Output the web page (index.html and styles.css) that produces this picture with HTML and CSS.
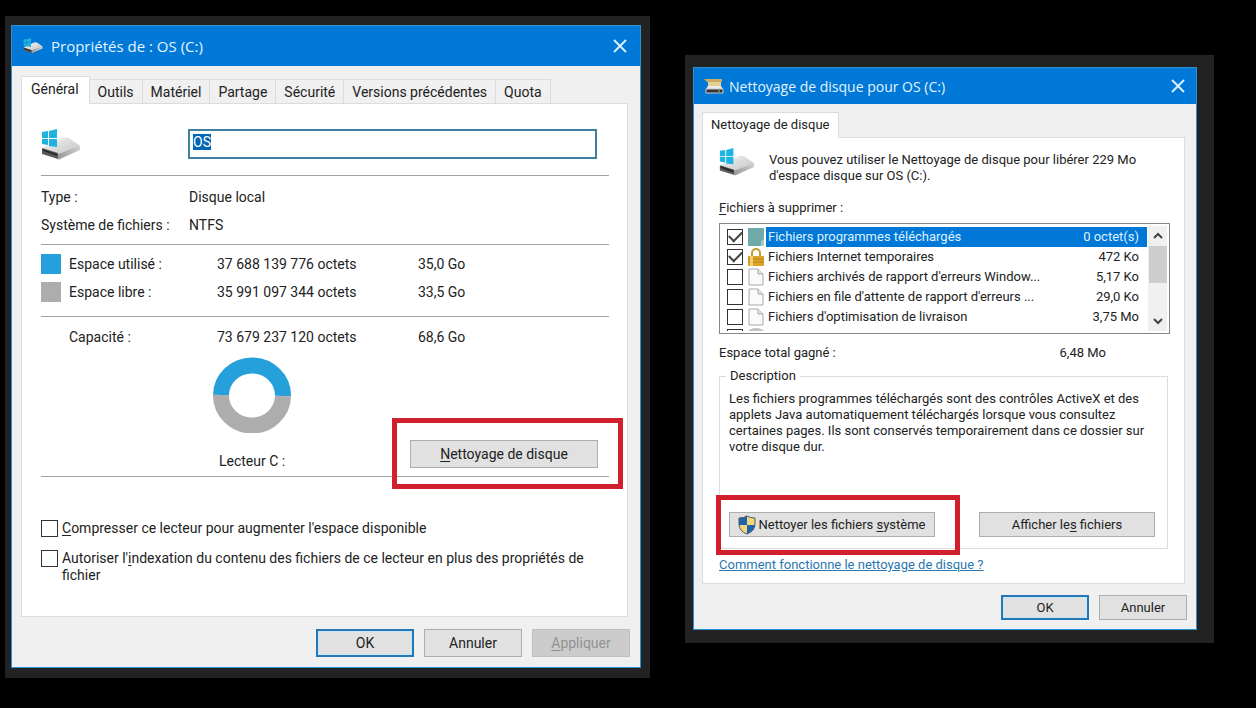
FILE: index.html
```html
<!DOCTYPE html>
<html lang="fr">
<head>
<meta charset="UTF-8">
<meta name="viewport" content="width=device-width, initial-scale=1.0">
<title>Nettoyage de disque</title>
<link rel="stylesheet" href="styles.css">
</head>
<body>

<!-- Shared drive icon -->
<svg class="sprite" aria-hidden="true">
  <defs>
    <linearGradient id="driveTop" x1="0" y1="0" x2="1" y2="1">
      <stop offset="0" stop-color="#f4f4f4"/>
      <stop offset="1" stop-color="#c4c4c4"/>
    </linearGradient>
    <linearGradient id="driveSide" x1="0" y1="0" x2="1" y2="0">
      <stop offset="0" stop-color="#989898"/>
      <stop offset="1" stop-color="#cfcfcf"/>
    </linearGradient>
  </defs>
  <symbol id="drive" viewBox="0 0 40 32">
    <path d="M1 19 L22 9 Q25 8 28 9 L38 16 Q39 17 39 18 L17 25 Z" fill="url(#driveTop)"/>
    <path d="M17 25 L39 17 V21 L19 30 Q18 31 17 30 Z" fill="url(#driveSide)"/>
    <path d="M1 19 L17 24 V30 L1 25 Z" fill="#5a5a5a"/>
    <path d="M2 20 L16 25 V27 L2 22 Z" fill="#2a2a2a"/>
    <path d="M1 3 L7 2 V9 H1 Z M8 2 L16 0 V9 H8 Z M1 10 H7 V16 L1 15 Z M8 10 H16 V18 L8 17 Z" fill="#1fb4e0"/>
  </symbol>
  <symbol id="page" viewBox="0 0 16 18">
    <path d="M1 1 H10 L15 6 V17 H1 Z" fill="#fafafa" stroke="#a8a8a8"/>
    <path d="M10 1 V6 H15" fill="#e8e8e8" stroke="#a8a8a8"/>
  </symbol>
</svg>

<main class="desktop">

  <div class="backdrop backdrop-left">
    <section class="window">
      <header class="titlebar titlebar-tall">
        <svg class="title-icon" viewBox="0 0 40 32"><use href="#drive"/></svg>
        <h1>Propriétés de : OS (C:)</h1>
        <button class="close" aria-label="Fermer">
          <svg viewBox="0 0 14 14"><path d="M1 1 L13 13 M13 1 L1 13"/></svg>
        </button>
      </header>

      <div class="window-body">
        <nav class="tabs">
          <button class="tab active">Général</button>
          <button class="tab">Outils</button>
          <button class="tab">Matériel</button>
          <button class="tab">Partage</button>
          <button class="tab">Sécurité</button>
          <button class="tab">Versions précédentes</button>
          <button class="tab">Quota</button>
        </nav>

        <div class="panel props">
          <div class="volume">
            <svg class="drive-icon" viewBox="0 0 40 32"><use href="#drive"/></svg>
            <input type="text" id="volumeName" value="OS" aria-label="Nom du volume">
          </div>

          <table class="facts">
            <tr><th>Type :</th><td>Disque local</td></tr>
            <tr><th>Système de fichiers :</th><td>NTFS</td></tr>
          </table>

          <table class="usage">
            <tr>
              <th><span class="swatch used"></span>Espace utilisé :</th>
              <td class="bytes">37 688 139 776 octets</td>
              <td>35,0 Go</td>
            </tr>
            <tr>
              <th><span class="swatch free"></span>Espace libre :</th>
              <td class="bytes">35 991 097 344 octets</td>
              <td>33,5 Go</td>
            </tr>
          </table>

          <table class="usage capacity">
            <tr>
              <th><span class="swatch"></span>Capacité :</th>
              <td class="bytes">73 679 237 120 octets</td>
              <td>68,6 Go</td>
            </tr>
          </table>

          <div class="chart-row">
            <figure class="chart">
              <svg viewBox="0 0 78 76">
                <path d="M8 38 A31 30 0 0 1 70 39" stroke="#26a0da"/>
                <path d="M8 38 A31 30 0 0 0 70 39" stroke="#adadad"/>
              </svg>
              <figcaption>Lecteur C :</figcaption>
            </figure>
            <div class="marked marked-wide">
              <button class="btn"><u>N</u>ettoyage de disque</button>
            </div>
          </div>

          <div class="options">
            <label class="option"><input type="checkbox"><span><u>C</u>ompresser ce lecteur pour augmenter l'espace disponible</span></label>
            <label class="option"><input type="checkbox"><span>Autoriser l'<u>i</u>ndexation du contenu des fichiers de ce lecteur en plus des propriétés de<br>fichier</span></label>
          </div>
        </div>

        <footer class="actions">
          <button class="btn default">OK</button>
          <button class="btn">Annuler</button>
          <button class="btn" disabled><u>A</u>ppliquer</button>
        </footer>
      </div>
    </section>
  </div>

  <div class="backdrop backdrop-right">
    <section class="window small">
      <header class="titlebar">
        <svg class="title-icon" viewBox="0 0 20 16">
          <path d="M0 1 H18 V4 H3 Z" fill="#c9ab62"/>
          <path d="M4 4 H17 V8 H4 Z" fill="#e6cf93"/>
          <path d="M4 8 H17 L19 11 H2 Z" fill="#e9e9e9"/>
          <path d="M2 11 H19 V15 H2 Z" fill="#333" stroke="#c8c8c8"/>
          <path d="M14 13 H16" stroke="#6fe06f"/>
        </svg>
        <h1>Nettoyage de disque pour OS (C:)</h1>
        <button class="close" aria-label="Fermer">
          <svg viewBox="0 0 14 14"><path d="M1 1 L13 13 M13 1 L1 13"/></svg>
        </button>
      </header>

      <div class="window-body">
        <nav class="tabs">
          <button class="tab active">Nettoyage de disque</button>
        </nav>

        <div class="panel cleanup">
          <div class="intro">
            <svg class="drive-icon" viewBox="0 0 40 32"><use href="#drive"/></svg>
            <p>Vous pouvez utiliser le Nettoyage de disque pour libérer 229 Mo<br>d'espace disque sur OS (C:).</p>
          </div>

          <p class="list-title"><u>F</u>ichiers à supprimer :</p>
          <div class="listbox">
            <ul>
              <li class="selected"><label>
                <input type="checkbox" checked>
                <svg viewBox="0 0 16 18"><path d="M0 0 H16 V18 H0 Z" fill="#6fa9a8"/><path d="M13 18 V13 L16 11 V18 Z" fill="#a5cbc8"/></svg>
                <span>Fichiers programmes téléchargés</span><b>0 octet(s)</b>
              </label></li>
              <li><label>
                <input type="checkbox" checked>
                <svg viewBox="0 0 16 18">
                  <path d="M4 9 V5 A4 4 0 0 1 12 5 V9" fill="none" stroke="#c9982f" stroke-width="2"/>
                  <path d="M0 8 H16 V18 H0 Z" fill="#dba52c"/>
                  <path d="M0 11 H16 M0 14 H16" stroke="#b97f14"/>
                  <path d="M2 8 H5 V18 H2 Z" fill="#f1cf6c"/>
                </svg>
                <span>Fichiers Internet temporaires</span><b>472 Ko</b>
              </label></li>
              <li><label>
                <input type="checkbox">
                <svg viewBox="0 0 16 18"><use href="#page"/></svg>
                <span>Fichiers archivés de rapport d'erreurs Window...</span><b>5,17 Ko</b>
              </label></li>
              <li><label>
                <input type="checkbox">
                <svg viewBox="0 0 16 18"><use href="#page"/></svg>
                <span>Fichiers en file d'attente de rapport d'erreurs ...</span><b>29,0 Ko</b>
              </label></li>
              <li><label>
                <input type="checkbox">
                <svg viewBox="0 0 16 18"><use href="#page"/></svg>
                <span>Fichiers d'optimisation de livraison</span><b>3,75 Mo</b>
              </label></li>
              <li><label>
                <input type="checkbox" aria-label="Corbeille">
                <svg viewBox="0 0 16 18"><ellipse cx="8" cy="4" rx="8" ry="4" fill="#c4c4c4"/></svg>
              </label></li>
            </ul>
            <div class="scrollbar">
              <svg viewBox="0 0 10 8"><path d="M1 6 L5 2 L9 6"/></svg>
              <div class="thumb"></div>
              <svg viewBox="0 0 10 8"><path d="M1 2 L5 6 L9 2"/></svg>
            </div>
          </div>

          <p class="total"><span>Espace total gagné :</span><span>6,48 Mo</span></p>

          <fieldset>
            <legend>Description</legend>
            <p>Les fichiers programmes téléchargés sont des contrôles ActiveX et des<br>applets Java automatiquement téléchargés lorsque vous consultez<br>certaines pages. Ils sont conservés temporairement dans ce dossier sur<br>votre disque dur.</p>
            <div class="group-buttons">
              <div class="marked">
                <button class="btn">
                  <svg class="shield" viewBox="0 0 18 20">
                    <path d="M9 1 Q12 3 17 3 V9 Q17 16 9 19 Q1 16 1 9 V3 Q6 3 9 1 Z" fill="#f3d57a"/>
                    <path d="M9 1 V10 H1 V3 Q6 3 9 1 Z" fill="#1f62ad"/>
                    <path d="M9 10 H17 Q16 16 9 19 Z" fill="#1f62ad"/>
                    <path d="M9 1 Q12 3 17 3 V9 Q17 16 9 19 Q1 16 1 9 V3 Q6 3 9 1 Z" fill="none" stroke="#4c5a68"/>
                  </svg>
                  <span>Nettoyer les fichiers <u>s</u>ystème</span>
                </button>
              </div>
              <button class="btn"><span>Afficher le<u>s</u> fichiers</span></button>
            </div>
          </fieldset>

          <a class="help" href="#">Comment fonctionne le nettoyage de disque ?</a>
        </div>

        <footer class="actions">
          <button class="btn default">OK</button>
          <button class="btn">Annuler</button>
        </footer>
      </div>
    </section>
  </div>

</main>

<script>
  // the volume name is selected when the dialog opens
  var volumeName = document.getElementById('volumeName');
  volumeName.focus();
  volumeName.select();
</script>
</body>
</html>
```
FILE: styles.css
```css
* {
  box-sizing: border-box;
}
body {
  margin: 0;
  background-color: #000;
  font-family: Roboto, "Liberation Sans", sans-serif;
  font-size: 14px;
  color: #222;
}
p, h1, ul, figure, fieldset {
  margin: 0;
  padding: 0;
}
button, input {
  font: inherit;
  color: inherit;
}
u {
  text-underline-offset: 2px;
}
.sprite {
  position: absolute;
  width: 0;
  height: 0;
}
.desktop {
  display: grid;
  grid-template-columns: minmax(0, 645fr) minmax(0, 529fr);
  gap: 35px;
  align-items: start;
  padding: 16px 42px 16px 5px;
}
.backdrop {
  background-color: #222;
}
.backdrop-left {
  padding: 9px 9px 10px 6px;
}
.backdrop-right {
  margin-top: 39px;
  padding: 12px 17px 13px 8px;
}

/* Windows */
.window {
  background-color: #f0f0f0;
  border: 1px solid #2f8fd0;
  white-space: nowrap;
}
.small {
  font-size: 13px;
}
.titlebar {
  display: flex;
  align-items: center;
  height: 36px;
  padding: 0 11px 0 9px;
  background-color: #0078d7;
  color: #e4f3ff;
}
.titlebar-tall {
  height: 40px;
  padding-right: 13px;
}
.titlebar h1 {
  flex: 1;
  font-family: "Open Sans", "Noto Sans", sans-serif;
  font-size: 14px;
  font-weight: normal;
}
.titlebar-tall h1 {
  font-size: 15px;
}
.title-icon {
  width: 20px;
  height: 16px;
  margin: 0 5px 0 1px;
}
.titlebar-tall .title-icon {
  margin: 0 8px 0 2px;
}
.close {
  display: flex;
  padding: 0;
  border: none;
  background: none;
}
.close svg {
  width: 14px;
  height: 14px;
  fill: none;
  stroke: #d8efff;
  stroke-width: 2;
}
.window-body {
  padding: 8px 8px 8px 7px;
  border: 1px solid #e3f3fc;
  border-top: none;
}
.titlebar-tall + .window-body {
  padding: 10px 9px 9px 8px;
}

/* Tabs */
.tabs {
  display: flex;
  align-items: flex-end;
  height: 27px;
}
.tab {
  height: 24px;
  padding: 0 8px;
  border: 1px solid #dcdcdc;
  border-left: none;
  border-bottom: none;
  background-color: #f0f0f0;
}
.tab.active {
  position: relative;
  height: 28px;
  margin-bottom: -1px;
  padding-bottom: 3px;
  border-left: 1px solid #dcdcdc;
  background-color: #fff;
}
.titlebar-tall + .window-body .active {
  padding-left: 9px;
  padding-right: 10px;
}
.small .tabs {
  height: 25px;
}
.small .tab.active {
  height: 26px;
}
.panel {
  background-color: #fff;
  border: 1px solid #dcdcdc;
}

/* Properties */
.props {
  margin-right: 2px;
  padding: 25px 18px 32px 19px;
}
.volume {
  display: flex;
  justify-content: space-between;
  height: 47px;
  padding-right: 12px;
  border-bottom: 1px solid #a0a0a0;
}
.drive-icon {
  width: 40px;
  height: 32px;
}
.volume input {
  width: 409px;
  height: 30px;
  padding: 0 3px 4px;
  border: 2px solid #3f7f9f;
  outline: none;
}
.volume input::selection {
  background-color: #0067b8;
  color: #fff;
}
table {
  width: 100%;
  border-collapse: collapse;
  table-layout: fixed;
}
th, td {
  height: 28px;
  padding: 0;
  line-height: 20px;
  text-align: left;
  font-weight: normal;
}
.facts th {
  width: 148px;
}
.facts, .usage {
  border-bottom: 1px solid #a0a0a0;
  border-collapse: separate;
  border-spacing: 0;
}
.facts {
  padding: 7px 0 5px;
}
.usage {
  padding: 5px 0 10px;
}
.usage th {
  width: 176px;
}
.usage .bytes {
  width: 201px;
}
.capacity {
  padding: 6px 0 0;
  border-bottom: none;
}
.swatch {
  float: left;
  width: 20px;
  height: 20px;
  margin-right: 8px;
}
.used {
  background-color: #26a0da;
}
.free {
  background-color: #adadad;
}
.chart-row {
  display: flex;
  justify-content: space-between;
  align-items: flex-end;
  padding: 6px 11px 5px 172px;
  border-bottom: 1px solid #a0a0a0;
}
.chart svg {
  display: block;
  width: 78px;
  height: 76px;
  fill: none;
  stroke-width: 16;
}
.chart figcaption {
  margin-top: 18px;
  padding-left: 6px;
  line-height: 20px;
}
.options {
  display: flex;
  flex-direction: column;
  gap: 13px;
  padding-top: 43px;
}
.option {
  display: flex;
  align-items: flex-start;
  gap: 4px;
  line-height: 17px;
}

/* Controls */
input[type="checkbox"] {
  appearance: none;
  flex: none;
  width: 17px;
  height: 17px;
  margin: 0;
  border: 1px solid #333;
  background-color: #fff;
}
.btn {
  width: 98px;
  height: 28px;
  padding: 0;
  border: 1px solid #adadad;
  background-color: #e1e1e1;
}
.btn.default {
  border: 2px solid #2678b5;
  outline: 1px solid #c9e6f8;
  outline-offset: -3px;
}
.btn:disabled {
  border-color: #bfbfbf;
  background-color: #ccc;
  color: #929292;
}
.actions {
  display: flex;
  justify-content: flex-end;
  gap: 10px;
  padding-top: 12px;
}
/* Red frame drawn over the button to press */
.marked {
  position: relative;
}
.marked::after {
  content: "";
  position: absolute;
  inset: -17px -25px -18px -13px;
  border: 5px solid #d0202e;
  pointer-events: none;
}
.marked-wide {
  margin-bottom: 3px;
}
.marked-wide::after {
  inset: -22px -25px -21px -18px;
}
.marked-wide .btn {
  display: block;
  width: 188px;
}

/* Disk cleanup */
.cleanup {
  margin-right: 2px;
  padding: 10px 14px 8px 16px;
}
.intro {
  display: flex;
  gap: 14px;
  line-height: 16px;
}
.intro .drive-icon {
  width: 36px;
  height: 29px;
}
.intro p {
  padding-top: 4px;
}
.list-title {
  margin-top: 14px;
  line-height: 20px;
}
.listbox {
  display: flex;
  height: 111px;
  margin-top: 5px;
  padding: 2px;
  border: 1px solid #828790;
}
.listbox ul {
  flex: 1;
  overflow: hidden;
  padding-top: 1px;
  list-style: none;
}
.listbox label {
  display: flex;
  align-items: center;
  height: 20px;
  padding-left: 5px;
}
.listbox input[type="checkbox"] {
  width: 16px;
  height: 16px;
  margin-right: 5px;
}
.listbox input:checked {
  display: grid;
  place-items: center;
}
.listbox input:checked::before {
  content: "";
  width: 11px;
  height: 6px;
  margin-top: -4px;
  border-left: 2px solid #444;
  border-bottom: 2px solid #444;
  transform: rotate(-45deg);
}
.listbox li svg {
  width: 16px;
  height: 18px;
  margin-right: 2px;
}
.listbox span {
  flex: 1;
  padding-left: 2px;
  line-height: 20px;
}
.listbox b {
  padding-right: 8px;
  font-weight: normal;
  line-height: 20px;
}
.selected span, .selected b {
  background-color: #0078d7;
  color: #dff0ff;
}
.scrollbar {
  display: flex;
  flex-direction: column;
  align-items: center;
  width: 19px;
  margin-left: 1px;
  background-color: #f0f0f0;
}
.scrollbar svg {
  width: 10px;
  height: 8px;
  margin: 6px 0;
  fill: none;
  stroke: #444;
  stroke-width: 2;
}
.thumb {
  width: 18px;
  height: 37px;
  margin-bottom: auto;
  background-color: #cdcdcd;
}
.total {
  display: flex;
  justify-content: space-between;
  margin-top: 9px;
  padding-right: 64px;
  line-height: 20px;
}
fieldset {
  margin-top: 5px;
  margin-right: 2px;
  padding: 7px 12px 11px 9px;
  border: 1px solid #dcdcdc;
  line-height: 16px;
}
legend {
  margin-left: -3px;
  padding: 0 4px;
}
.group-buttons {
  display: flex;
  justify-content: space-between;
  margin-top: 57px;
}
.group-buttons .btn {
  display: flex;
  align-items: center;
  justify-content: center;
  width: 176px;
  height: 25px;
}
.group-buttons .marked .btn {
  width: 206px;
}
.shield {
  width: 18px;
  height: 20px;
  margin-right: 2px;
}
.help {
  display: block;
  width: max-content;
  margin-top: 6px;
  color: #2a78b0;
  line-height: 20px;
}
.small .actions {
  padding-top: 11px;
}
.small .actions .btn {
  width: 88px;
  height: 25px;
}
```
